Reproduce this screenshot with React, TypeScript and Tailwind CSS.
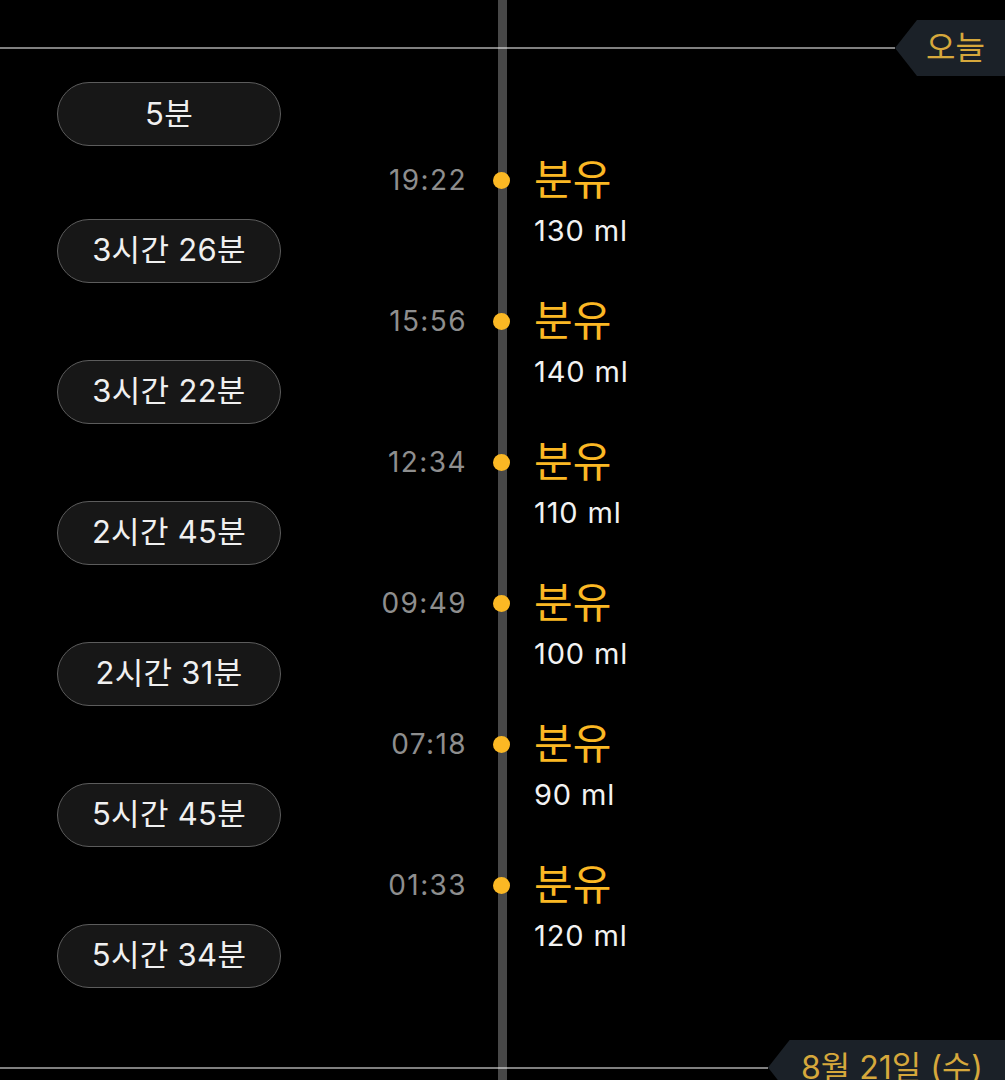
const feeds = [
  { time: "19:22", amount: "130 ml" },
  { time: "15:56", amount: "140 ml" },
  { time: "12:34", amount: "110 ml" },
  { time: "09:49", amount: "100 ml" },
  { time: "07:18", amount: "90 ml" },
  { time: "01:33", amount: "120 ml" },
];

const gaps = ["5분", "3시간 26분", "3시간 22분", "2시간 45분", "2시간 31분", "5시간 45분", "5시간 34분"];

function DateTag({ label, big }: { label: string; big?: boolean }) {
  return (
    <div className="relative z-10 flex items-center h-[56px]">
      <div className="flex-1 h-[2px] bg-white/50" />
      <div
        className={`h-[56px] flex items-center bg-[#1b2128] text-[#d6a83c] [clip-path:polygon(22px_0,100%_0,100%_100%,22px_100%,0_50%)] ${
          big ? "w-[237px] pl-[33px] text-[32px]" : "w-[110px] pl-[31px] text-[32px]"
        }`}
      >
        {label}
      </div>
    </div>
  );
}

function GapPill({ label, first }: { label: string; first?: boolean }) {
  return (
    <div className={`pl-[57px] ${first ? "-mb-[4.5px]" : ""}`}>
      <div className="w-[224px] h-[64px] rounded-full bg-[#171717] border-[1.5px] border-[#5c5c5c] flex items-center justify-center text-[31px] tracking-[0.01em] text-[#f0f0f0]">
        {label}
      </div>
    </div>
  );
}

function FeedRow({ time, amount }: { time: string; amount: string }) {
  return (
    <div className="relative z-10 grid grid-cols-[498px_9px_1fr] h-[44px] items-center">
      <div className="text-right pr-[31px] text-[28px] tracking-[0.05em] text-[#8e8e8e]">{time}</div>
      <div className="w-[17px] h-[17px] -ml-[5px] rounded-full bg-[#fbb824]" />
      <div className="pl-[27px] h-[44px]">
        <div className="leading-[44px] text-[42px] text-[#fbb824]">분유</div>
        <div className="mt-[12px] leading-[34px] text-[29px] tracking-[0.03em] text-[#f2f2f2]">{amount}</div>
      </div>
    </div>
  );
}

export default function App() {
  return (
    <div className="relative h-[1080px] w-[1005px] overflow-hidden bg-black font-['Inter','Noto_Sans_CJK_KR',sans-serif]">
      {/* timeline spine */}
      <div className="absolute left-[498px] top-0 bottom-0 w-[9px] bg-[#484848]" />

      <div className="pt-[20px]">
        <DateTag label="오늘" />
        <div className="mt-[6px] flex flex-col gap-[16.5px]">
          {gaps.map((g, i) => (
            <div key={i} className="flex flex-col gap-[16.5px]">
              <GapPill label={g} first={i === 0} />
              {feeds[i] && <FeedRow time={feeds[i].time} amount={feeds[i].amount} />}
            </div>
          ))}
        </div>
        <div className="mt-[52px]">
          <DateTag label="8월 21일 (수)" big />
        </div>
      </div>
    </div>
  );
}
